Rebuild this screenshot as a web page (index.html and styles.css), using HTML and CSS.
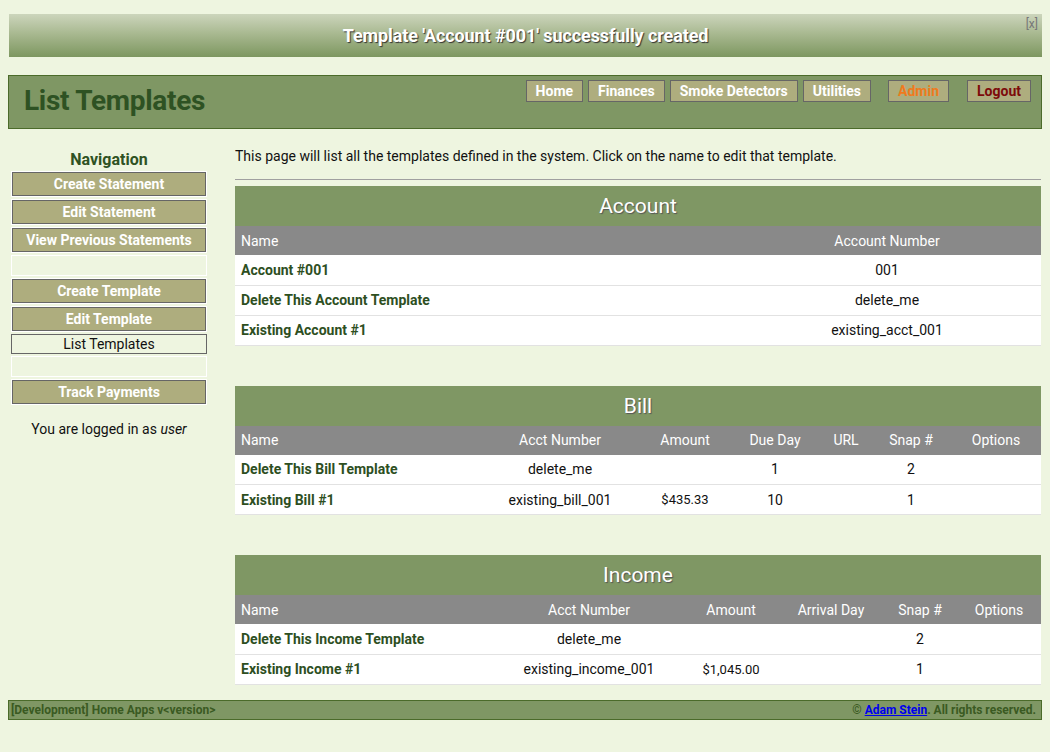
FILE: index.html
```html
<!DOCTYPE html>
<html>
<head>
<meta charset="utf-8">
<title>List Templates</title>
<link rel="stylesheet" href="styles.css">
</head>
<body>
<div class="flash">
  <span class="flash-text">Template 'Account #001' successfully created</span>
  <a class="flash-close">[x]</a>
</div>
<header class="header">
  <h1 class="title">List Templates</h1>
  <nav class="topnav">
    <div class="topnav-group">
      <a class="tbtn">Home</a>
      <a class="tbtn">Finances</a>
      <a class="tbtn">Smoke Detectors</a>
      <a class="tbtn">Utilities</a>
    </div>
    <a class="tbtn admin">Admin</a>
    <a class="tbtn logout">Logout</a>
  </nav>
</header>
<div class="content">
  <aside class="sidebar">
    <h3 class="side-title">Navigation</h3>
    <ul class="side-list">
      <li class="side-item"><a class="sbtn">Create Statement</a></li>
      <li class="side-item"><a class="sbtn">Edit Statement</a></li>
      <li class="side-item"><a class="sbtn">View Previous Statements</a></li>
      <li class="side-spacer"></li>
      <li class="side-item"><a class="sbtn">Create Template</a></li>
      <li class="side-item"><a class="sbtn">Edit Template</a></li>
      <li class="side-current">List Templates</li>
      <li class="side-spacer"></li>
      <li class="side-item"><a class="sbtn">Track Payments</a></li>
    </ul>
    <p class="logged">You are logged in as <em>user</em></p>
  </aside>
  <main class="main">
    <p class="intro">This page will list all the templates defined in the system. Click on the name to edit that template.</p>
    <hr class="rule">
    <section class="tsec">
      <div class="tsec-title">Account</div>
      <table class="grid">
        <thead>
          <tr><th class="left a-name">Name</th><th>Account Number</th></tr>
        </thead>
        <tbody>
          <tr><td class="name">Account #001</td><td>001</td></tr>
          <tr><td class="name">Delete This Account Template</td><td>delete_me</td></tr>
          <tr><td class="name">Existing Account #1</td><td>existing_acct_001</td></tr>
        </tbody>
      </table>
    </section>
    <section class="tsec">
      <div class="tsec-title">Bill</div>
      <table class="grid">
        <thead>
          <tr><th class="left b-name">Name</th><th class="b-acct">Acct Number</th><th class="b-amt">Amount</th><th class="b-due">Due Day</th><th class="b-url">URL</th><th class="b-snap">Snap #</th><th class="b-opt">Options</th></tr>
        </thead>
        <tbody>
          <tr><td class="name">Delete This Bill Template</td><td>delete_me</td><td></td><td>1</td><td></td><td>2</td><td></td></tr>
          <tr><td class="name">Existing Bill #1</td><td>existing_bill_001</td><td class="num">$435.33</td><td>10</td><td></td><td>1</td><td></td></tr>
        </tbody>
      </table>
    </section>
    <section class="tsec">
      <div class="tsec-title">Income</div>
      <table class="grid">
        <thead>
          <tr><th class="left i-name">Name</th><th class="i-acct">Acct Number</th><th class="i-amt">Amount</th><th class="i-arr">Arrival Day</th><th class="i-snap">Snap #</th><th class="i-opt">Options</th></tr>
        </thead>
        <tbody>
          <tr><td class="name">Delete This Income Template</td><td>delete_me</td><td></td><td></td><td>2</td><td></td></tr>
          <tr><td class="name">Existing Income #1</td><td>existing_income_001</td><td class="num">$1,045.00</td><td></td><td>1</td><td></td></tr>
        </tbody>
      </table>
    </section>
  </main>
</div>
<footer class="footer">
  <span>[Development] Home Apps v&lt;version&gt;</span>
  <span>&copy; <a class="flink" href="#">Adam Stein</a>. All rights reserved.</span>
</footer>
</body>
</html>
```
FILE: styles.css
```css
* { box-sizing: border-box; }
html, body {
  margin: 0;
  padding: 0;
  background: #eef5e0;
}
body {
  font-family: Roboto, "Open Sans", sans-serif;
  font-size: 14px;
  color: #111;
  padding: 14px 8px 0 8px;
}
.flash {
  position: relative;
  margin: 0 0 18px 1px;
  height: 43px;
  background: linear-gradient(to bottom, #ccd5bc 0%, #a9b991 45%, #7d9760 100%);
  display: flex;
  align-items: center;
  justify-content: center;
}
.flash-text {
  color: #fff;
  font-weight: bold;
  font-size: 18px;
  text-shadow: 1px 1px 1px #333;
  letter-spacing: -0.1px;
}
.flash-close {
  position: absolute;
  top: 3px;
  right: 4px;
  font-size: 12px;
  color: #777;
}
.header {
  height: 54px;
  background: #7f9764;
  border: 1px solid #4b6b2a;
  display: flex;
  justify-content: space-between;
  align-items: flex-start;
}
.title {
  margin: 0;
  padding-left: 15px;
  line-height: 50px;
  font-size: 28px;
  font-weight: bold;
  color: #2e5223;
  letter-spacing: -0.3px;
}
.topnav {
  display: flex;
  margin: 4px 10px 0 0;
}
.topnav-group {
  display: flex;
  gap: 5px;
  margin-right: 17px;
}
.tbtn {
  display: block;
  height: 22px;
  line-height: 20px;
  padding: 0 9px;
  background: #aead7e;
  border: 1px solid #666;
  color: #fff;
  font-weight: bold;
  font-size: 14px;
}
.admin { color: #f07a1d; margin-right: 18px; }
.logout { color: #7d0a0a; }
.content {
  display: flex;
  gap: 28px;
  padding: 0 1px 0 3px;
}
.sidebar {
  width: 196px;
  flex-shrink: 0;
  padding-top: 21px;
}
.side-title {
  margin: 0 0 1px 0;
  text-align: center;
  font-size: 16px;
  font-weight: bold;
  color: #2e5223;
  line-height: 20px;
}
.side-list {
  list-style: none;
  margin: 0;
  padding: 0;
}
.side-item {
  border: 1px solid #fff;
  height: 26px;
  margin-bottom: 2px;
}
.sbtn {
  display: block;
  height: 24px;
  line-height: 22px;
  background: #aead7e;
  border: 1px solid #666;
  color: #fff;
  font-weight: bold;
  text-align: center;
}
.side-spacer {
  border: 1px solid #fff;
  height: 21px;
  margin-bottom: 2px;
}
.side-current {
  border: 1px solid #666;
  height: 20px;
  line-height: 18px;
  margin-bottom: 2px;
  text-align: center;
}
.logged {
  margin: 16px 0 0 0;
  text-align: center;
}
.main {
  flex: 1;
  padding-top: 17px;
}
.intro {
  margin: 0;
  line-height: 20px;
}
.rule {
  margin: 13px 0 6px 0;
  border: 0;
  border-top: 1px solid #a0a0a0;
  height: 0;
}
.tsec { margin-bottom: 40px; }
.tsec-title {
  height: 40px;
  line-height: 40px;
  background: #7f9764;
  color: #fff;
  text-align: center;
  font-size: 21px;
  text-shadow: 1px 1px 1px #555;
}
.grid {
  width: 100%;
  border-collapse: collapse;
  background: #fff;
}
.grid th {
  background: #898989;
  color: #fff;
  font-weight: normal;
  height: 29px;
  padding: 0 6px;
  text-align: center;
}
.grid th.left { text-align: left; }
.grid td {
  height: 30px;
  padding: 0 6px;
  text-align: center;
  border-bottom: 1px solid #e2e2e2;
}
.grid td.name {
  text-align: left;
  font-weight: bold;
  color: #2e4f1f;
}
.grid td.num { font-size: 13px; }
.a-name { width: 498px; }
.b-name { width: 244px; }
.b-acct { width: 162px; }
.b-amt { width: 88px; }
.b-due { width: 92px; }
.b-url { width: 50px; }
.b-snap { width: 80px; }
.b-opt { width: 90px; }
.i-name { width: 260px; }
.i-acct { width: 188px; }
.i-amt { width: 96px; }
.i-arr { width: 104px; }
.i-snap { width: 74px; }
.i-opt { width: 84px; }
.footer {
  margin: -25px 0 0 0;
  height: 20px;
  background: #7f9764;
  border: 1px solid #4b6b2a;
  display: flex;
  justify-content: space-between;
  align-items: center;
  padding: 0 5px 0 2px;
  font-size: 12px;
  font-weight: bold;
  color: #3a5a22;
}
.flink { color: #0000ee; text-decoration: underline; }
```
